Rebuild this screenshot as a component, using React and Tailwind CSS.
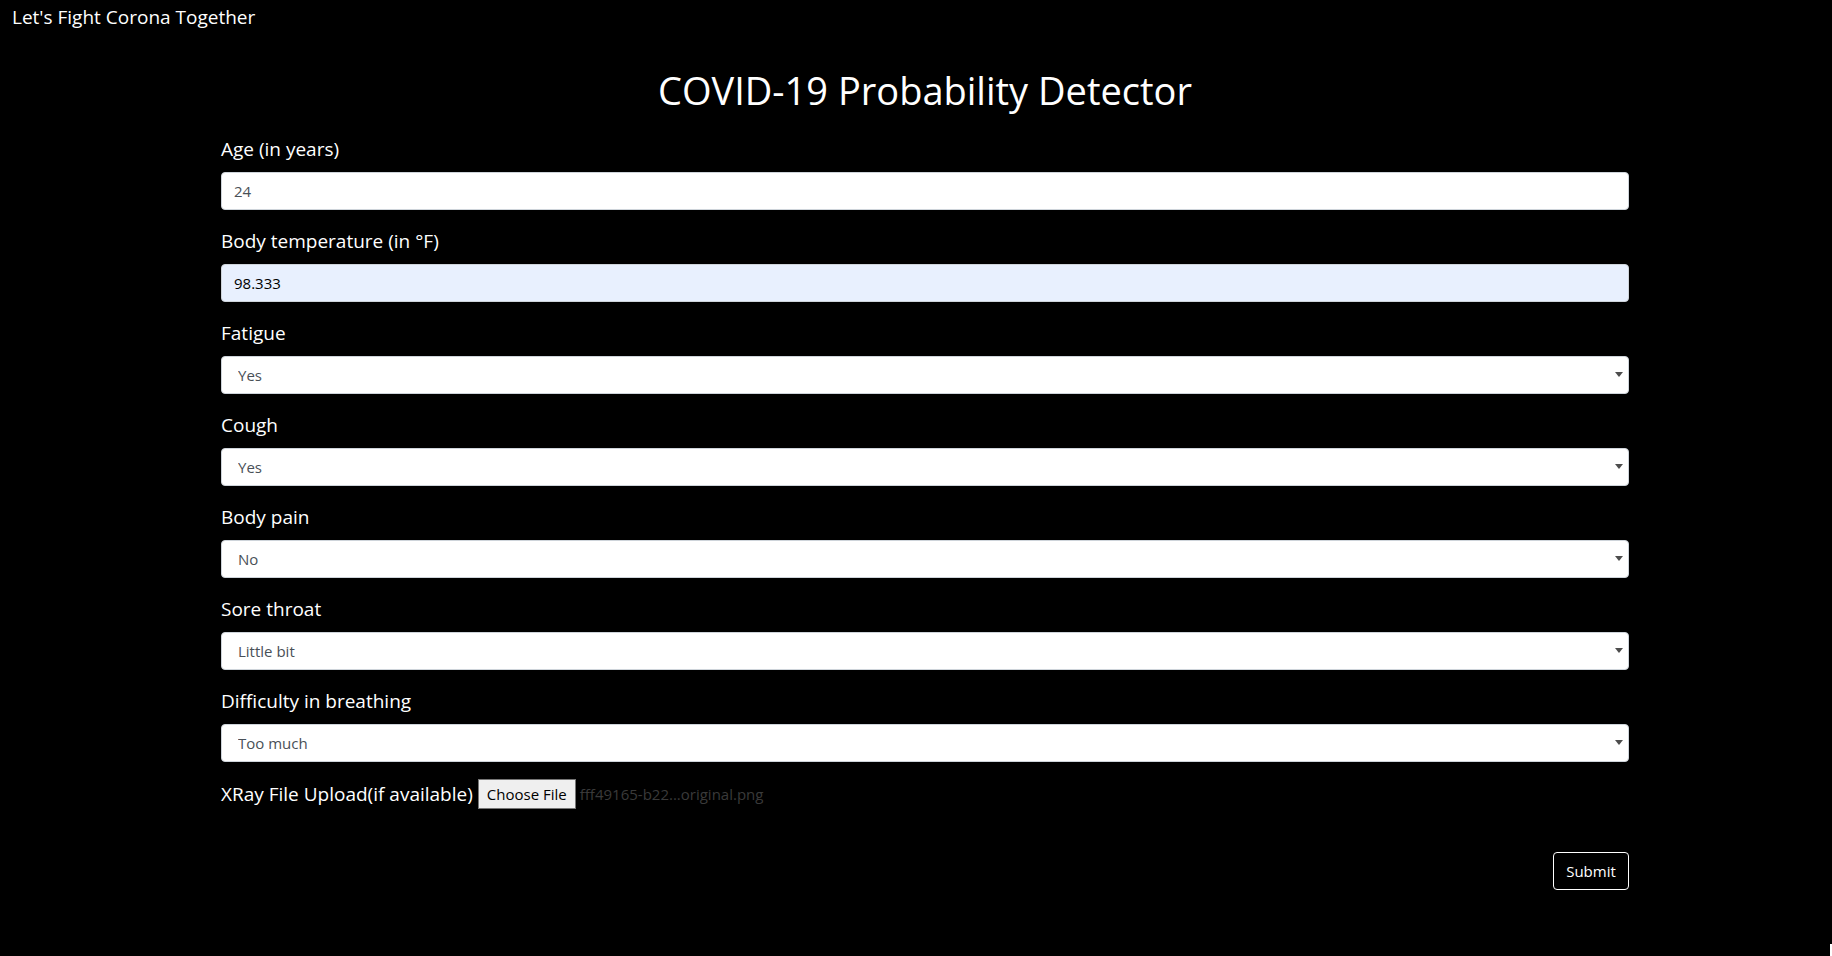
import React from 'react';

const selects = [
    { label: 'Fatigue', value: 'Yes', options: ['Yes', 'No'] },
    { label: 'Cough', value: 'Yes', options: ['Yes', 'No'] },
    { label: 'Body pain', value: 'No', options: ['Yes', 'No'] },
    { label: 'Sore throat', value: 'Little bit', options: ['No', 'Little bit', 'Too much'] },
    { label: 'Difficulty in breathing', value: 'Too much', options: ['No', 'Little bit', 'Too much'] },
];

const Field = ({ label, children }) => (
    <div className="mb-4">
        <label className="block mb-2 text-[19px] leading-[30px] text-white">{label}</label>
        {children}
    </div>
);

const SelectField = ({ label, value, options }) => (
    <Field label={label}>
        <div className="relative">
            <select
                defaultValue={value}
                className="block w-full h-[38px] appearance-none rounded-[4px] border border-[#ced4da] bg-white pl-[16px] pr-8 text-[15px] text-[#495057] outline-none"
            >
                {options.map((o) => (
                    <option key={o}>{o}</option>
                ))}
            </select>
            <span className="pointer-events-none absolute right-[6px] top-[16px] h-0 w-0 border-x-[4px] border-t-[5px] border-x-transparent border-t-[#4d4d4d]" />
        </div>
    </Field>
);

export default function App() {
    return (
        <div className="relative min-h-screen bg-black text-white font-['Open_Sans',sans-serif]">
            <div className="h-[32px] px-[12px] pt-[2px] text-[19px] leading-[30px]">Let's Fight Corona Together</div>

            <div className="ml-[221px] w-[1408px]">
                <h1 className="mt-[34px] text-center text-[38px] leading-[48px] font-normal">COVID-19 Probability Detector</h1>

                <form className="mt-[20px]" onSubmit={(e) => e.preventDefault()}>
                    <Field label="Age (in years)">
                        <input
                            defaultValue="24"
                            className="block w-full h-[38px] rounded-[4px] border border-[#ced4da] bg-white px-3 text-[15px] text-[#495057] outline-none"
                        />
                    </Field>
                    <Field label="Body temperature (in °F)">
                        <input
                            defaultValue="98.333"
                            className="block w-full h-[38px] rounded-[4px] border border-[#ced4da] bg-[#e8f0fe] px-3 text-[15px] text-black outline-none"
                        />
                    </Field>

                    {selects.map((s) => (
                        <SelectField key={s.label} {...s} />
                    ))}

                    <div className="flex items-center h-[32px]">
                        <span className="text-[19px] leading-[30px]">XRay File Upload(if available)</span>
                        <button type="button" className="ml-[5px] h-[30px] w-[98px] border border-[#767676] bg-[#efefef] text-[15px] text-black">
                            Choose File
                        </button>
                        <span className="ml-[4px] text-[15px] text-[#3a3a3a]">fff49165-b22...original.png</span>
                    </div>

                    <div className="mt-[42px] flex justify-end">
                        <button type="submit" className="h-[38px] w-[76px] rounded-[4px] border border-white text-[15px] text-white">
                            Submit
                        </button>
                    </div>
                </form>
            </div>

            <div className="absolute right-0 bottom-0 h-[12px] w-[2px] bg-white" />
        </div>
    );
}
